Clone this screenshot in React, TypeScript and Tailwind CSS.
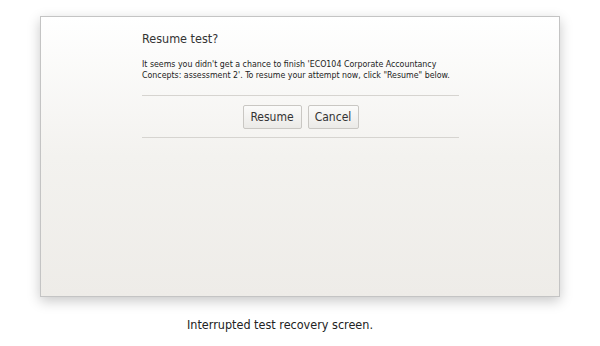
export default function App() {
    return (
        <div className="w-[600px] h-[346px] bg-white flex flex-col items-center" style={{ fontFamily: "'DejaVu Sans Condensed', 'Liberation Sans', sans-serif" }}>
            <div className="mt-[16px] w-[520px] h-[281px] border border-[#c4c4c4] bg-gradient-to-b from-white via-[#f3f2ef] to-[#eeece8] shadow-[0_4px_12px_rgba(0,0,0,0.22)] pl-[101px] pr-[100px] pt-[14px]">
                <h1 className="text-[12.5px] text-[#333] leading-[16px]">Resume test?</h1>
                <p className="mt-[12px] text-[8.75px] leading-[11px] text-[#222] whitespace-nowrap">
                    It seems you didn't get a chance to finish 'ECO104 Corporate Accountancy<br />
                    Concepts: assessment 2'. To resume your attempt now, click "Resume" below.
                </p>
                <div className="mt-[14px] border-t border-[#d6d4d0]" />
                <div className="flex justify-center gap-[6px] pt-[9px] pb-[8px]">
                    <button className="w-[59px] h-[24px] rounded-[2px] border border-[#c9c7c3] bg-gradient-to-b from-[#fbfbfa] to-[#ebeae7] text-[12px] text-[#333]">Resume</button>
                    <button className="w-[51px] h-[24px] rounded-[2px] border border-[#c9c7c3] bg-gradient-to-b from-[#fbfbfa] to-[#ebeae7] text-[12px] text-[#333]">Cancel</button>
                </div>
                <div className="border-t border-[#d6d4d0]" />
            </div>
            <div className="mt-[19px] mr-[40px] text-[12.5px] text-[#222]">Interrupted test recovery screen.</div>
        </div>
    );
}
